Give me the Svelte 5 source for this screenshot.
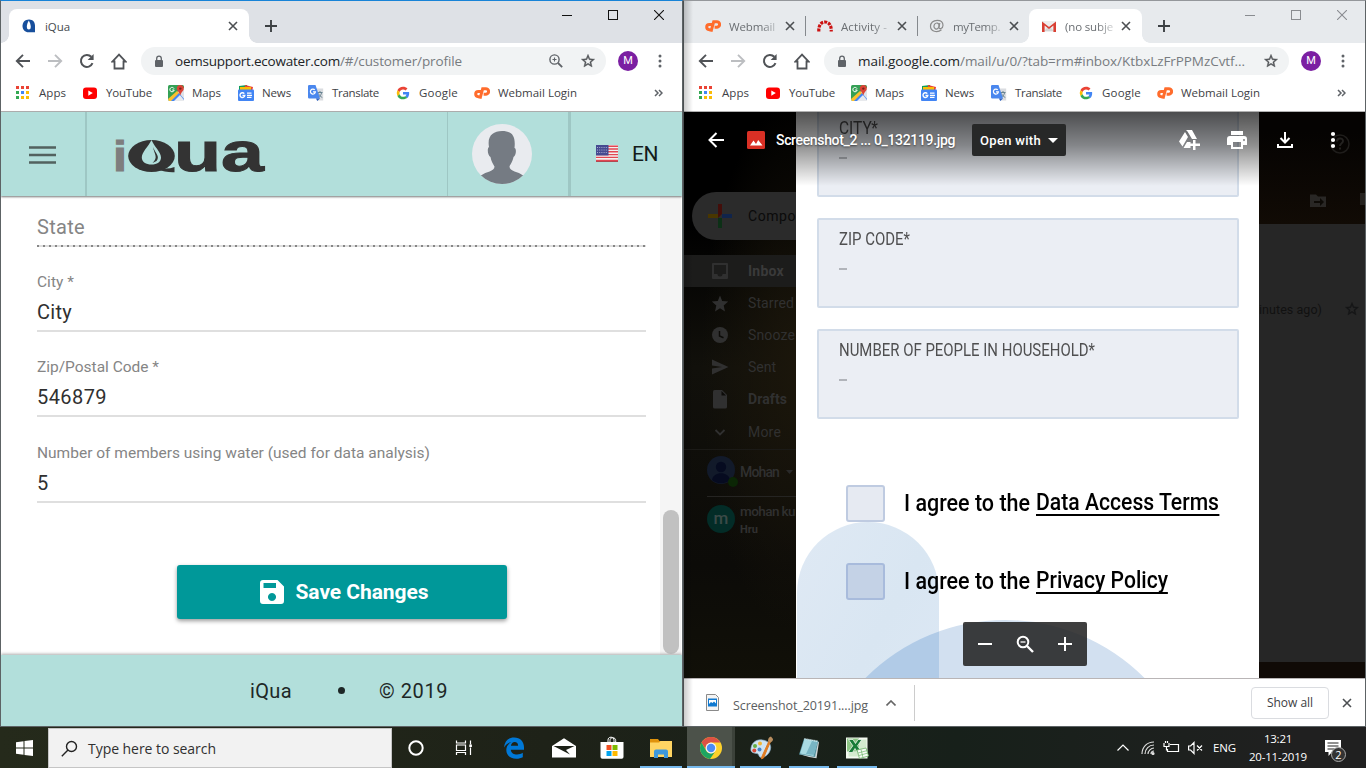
<script>
  const bookmarks = [
    { icon: 'apps', label: 'Apps', w: 67, tw: 27 },
    { icon: 'youtube', label: 'YouTube', w: 86, tw: 46 },
    { icon: 'maps', label: 'Maps', w: 70, tw: 29 },
    { icon: 'news', label: 'News', w: 70, tw: 29 },
    { icon: 'translate', label: 'Translate', w: 87, tw: 47 },
    { icon: 'google', label: 'Google', w: 79, tw: 39 },
    { icon: 'cp', label: 'Webmail Login', w: 110, tw: 79 }
  ];
  const tabs = [
    { icon: 'cp', label: 'Webmail', tw: 46 },
    { icon: 'activity', label: 'Activity -', tw: 46 },
    { icon: 'at', label: 'myTemp.', tw: 47 },
    { icon: 'gmail', label: '(no subje', tw: 48, active: true }
  ];
  const fields = [
    { label: 'City *', value: 'City', lw: 37, vw: 35 },
    { label: 'Zip/Postal Code *', value: '546879', lw: 122, vw: 70 },
    { label: 'Number of members using water (used for data analysis)', value: '5', lw: 393, vw: 11 }
  ];
  const folders = [
    { icon: 'inbox', label: 'Inbox', bold: true, tw: 36 },
    { icon: 'star', label: 'Starred', tw: 46 },
    { icon: 'clock', label: 'Snooze', tw: 47 },
    { icon: 'send', label: 'Sent', tw: 28 },
    { icon: 'draft', label: 'Drafts', bold: true, tw: 39 },
    { icon: 'more', label: 'More', tw: 33 }
  ];
  const formBoxes = [
    { label: 'CITY*', tw: 39 },
    { label: 'ZIP CODE*', tw: 71 },
    { label: 'NUMBER OF PEOPLE IN HOUSEHOLD*', tw: 256 }
  ];
  const terms = [
    { link: 'Data Access Terms', tw: 183 },
    { link: 'Privacy Policy', tw: 132 }
  ];
  const pinned = ['cortana', 'taskview', 'edge', 'mail', 'store', 'explorer', 'chrome', 'paint', 'notepad', 'excel'];

  // Tracks the text so that it fills the given width.
  function fit(node, w) {
    const natural = node.getBoundingClientRect().width;
    node.style.letterSpacing = (w - natural) / node.textContent.length + 'px';
  }
  // Condenses or expands the glyphs themselves to the given width.
  function squeeze(node, w) {
    const natural = node.getBoundingClientRect().width;
    node.style.transform = `scaleX(${w / natural})`;
    node.style.marginRight = w - natural + 'px';
  }
</script>

{#snippet icon(name)}
  {#if name === 'apps'}
    <svg width="16" height="16" viewBox="0 0 16 16">
      {#each ['#ea4335', '#ea4335', '#ea4335', '#34a853', '#4285f4', '#fbbc05', '#34a853', '#fbbc05', '#fbbc05'] as c, i}
        <rect x={1 + (i % 3) * 5} y={1 + Math.floor(i / 3) * 5} width="3" height="3" fill={c} />
      {/each}
    </svg>
  {:else if name === 'youtube'}
    <svg width="16" height="16" viewBox="0 0 16 16"><rect x="1" y="2.5" width="14" height="11.5" rx="3" fill="#f00" /><path d="M6.3 5.4v5.4L10.8 8.1z" fill="#fff" /></svg>
  {:else if name === 'maps'}
    <svg width="16" height="16" viewBox="0 0 16 16"><rect width="16" height="16" rx="1.5" fill="#34a055" /><path d="M0 15L14 3h2v13H1z" fill="#dfe3e8" /><path d="M0 14L9 6l3 3-7 7H1z" fill="#fbc02d" /><path d="M3 16L11 8l5 6v2z" fill="#4285f4" /><path d="M6 16l6-6 4 5v1z" fill="#e8eaed" /><path d="M6 3.6A2.2 2.2 0 1 0 6.2 5H4.2" fill="none" stroke="#fff" stroke-width="1" /><path d="M12.3 0a3.5 3.5 0 0 0-3.5 3.5c0 2.6 2.6 3.2 3.5 7 .9-3.8 3.5-4.4 3.5-7A3.5 3.5 0 0 0 12.3 0z" fill="#db4437" /><circle cx="12.3" cy="3.6" r="1.2" fill="#7b231a" /></svg>
  {:else if name === 'news'}
    <svg width="16" height="16" viewBox="0 0 16 16"><path d="M1 1l8-1 1 6H1z" fill="#0f9d58" /><path d="M7 0l8 2-1 5H6z" fill="#ea4335" /><path d="M2 2h11v5H2z" fill="#fbbc04" /><rect y="4.5" width="16" height="11.5" rx="1" fill="#4285f4" /><path d="M6.3 8.6A2.4 2.4 0 1 0 6.8 10.4H4.5" fill="none" stroke="#fff" stroke-width="1.4" /><path d="M9 8.2h4.5M9 10.3h5M9 12.4h4.5" stroke="#fff" stroke-width="1.2" /></svg>
  {:else if name === 'translate'}
    <svg width="16" height="16" viewBox="0 0 16 16"><path d="M6 3.5h9.2v12H9z" fill="#dadce0" /><path d="M9.5 7.5h5M12 6v1.5m1.7 0c-.5 2.5-2 4-3.7 5m.5-4c.7 1.8 2 3 3.8 4" fill="none" stroke="#607d8b" stroke-width=".9" /><path d="M1.2 0h6.3L12 13.5H1.2A1.2 1.2 0 0 1 0 12.300V1.200A1.200 1.200 0 0 1 1.200 0z" fill="#4a87ee" /><path d="M8 13.500h4L9.300 16z" fill="#2b5fc0" /><path d="M6.800 4.900A2.500 2.500 0 1 0 7.400 6.900H5" fill="none" stroke="#fff" stroke-width="1.200" /></svg>
  {:else if name === 'google'}
    <svg width="16" height="16" viewBox="0 0 48 48"><path fill="#ea4335" d="M24 13.500c3 0 5.600 1 7.700 3l5.700-5.700C33.900 7.500 29.400 5.500 24 5.500c-7.400 0-13.700 4.200-16.700 10.300l6.600 5.100C15.500 16.600 19.400 13.500 24 13.500z" /><path fill="#4285f4" d="M42.500 24.500c0-1.300-.1-2.500-.4-3.700H24v7.600h10.400c-.5 2.400-1.900 4.400-3.900 5.700l6.300 5C40.500 35.700 42.500 30.600 42.500 24.500z" /><path fill="#fbbc05" d="M13.900 27.700a11.500 11.500 0 0 1 0-6.900l-6.600-5.100a18.500 18.500 0 0 0 0 17.100z" /><path fill="#34a853" d="M24 43c5.100 0 9.400-1.700 12.800-4.500l-6.300-4.900c-1.800 1.200-3.900 1.900-6.500 1.900-4.700 0-8.700-3.200-10.100-7.800l-6.600 5.100C10.300 38.800 16.600 43 24 43z" /></svg>
  {:else if name === 'cp'}
    <svg width="16" height="16" viewBox="0 0 16 16" fill="none" stroke="#ff6c2c" stroke-width="3"><path d="M7 6.500H4.300a2.600 2.600 0 0 0 0 5.200h1.400" /><path d="M6 13.700L8.700 3.700h3a2.700 2.700 0 0 1 .3 5.500H9.600" /></svg>
  {:else if name === 'activity'}
    <svg width="16" height="16" viewBox="0 0 16 16" fill="none" stroke="#c11" stroke-width="3.200"><path d="M1.800 13.500C1.500 7.500 4 4 8 4s6.600 3.500 6.200 9.500" stroke-dasharray="2.900 1.100" /></svg>
  {:else if name === 'at'}
    <svg width="16" height="16" viewBox="0 0 16 16" fill="none" stroke="#8b8b8b" stroke-width="1.200"><ellipse cx="7.500" cy="8" rx="2.500" ry="3" transform="rotate(20 7.500 8)" /><path d="M10.800 5L10 9.500c0 2 4 1.400 4-2.200 0-3.200-2.500-5-5.800-5-4 0-6.700 2.700-6.700 6 0 5 6.500 7 11 3.500" /></svg>
  {:else if name === 'gmail'}
    <svg width="16" height="16" viewBox="0 0 16 16"><path d="M1 3h14v11H1z" fill="#eee" /><path d="M3 13l5-5 5 5z" fill="#d5d5d5" /><path d="M1 3.400L8 9l7-5.600V14h-2.600V7.600L8 11 3.600 7.600V14H1z" fill="#d93f33" /></svg>
  {:else if name === 'iqua'}
    <svg width="16" height="16" viewBox="0 0 16 16"><path d="M8 1.500C4 1.500 1.500 4.300 1.500 8S4 14.300 7.500 14.300h6.500V8C14 4.300 12 1.500 8 1.500z" fill="#174f9c" /><path d="M7.800 2.500C6.500 5 5.800 6.800 5.800 9a2 2.500 0 0 0 4 0C9.800 6.800 9 5 7.800 2.500z" fill="#fff" /></svg>
  {:else if name === 'x'}
    <svg width="10" height="10" viewBox="0 0 10 10" stroke="#4c4f52" stroke-width="1.600"><path d="M1 1l8 8M9 1L1 9" /></svg>
  {:else if name === 'back'}
    <svg width="16" height="16" viewBox="0 0 16 16" fill="none" stroke="#505357" stroke-width="1.900"><path d="M15 8H2.500M8 1.800L1.800 8 8 14.200" /></svg>
  {:else if name === 'forward'}
    <svg width="16" height="16" viewBox="0 0 16 16" fill="none" stroke="#bcbec1" stroke-width="1.900"><path d="M1 8h12.500M8 1.800L14.200 8 8 14.200" /></svg>
  {:else if name === 'reload'}
    <svg width="16" height="16" viewBox="0 0 16 16"><path d="M13.500 10.200A6 6 0 1 1 12.300 3.800" fill="none" stroke="#505357" stroke-width="2" /><path d="M14.600 1v6H8.600z" fill="#505357" /></svg>
  {:else if name === 'home'}
    <svg width="16" height="17" viewBox="0 0 16 17" fill="none" stroke="#505357" stroke-width="1.800"><path d="M8 1.600L1.500 8.500H3.500V15.500H12.500V8.500H14.500z" /></svg>
  {:else if name === 'lock'}
    <svg width="10" height="13" viewBox="0 0 10 13"><rect x="1" y="5" width="8" height="7" rx="1" fill="#5f6368" /><path d="M2.700 5.500V3.400a2.300 2.300 0 0 1 4.600 0v2.100" fill="none" stroke="#5f6368" stroke-width="1.300" /></svg>
  {:else if name === 'zoom'}
    <svg width="14" height="14" viewBox="0 0 14 14" fill="none" stroke="#5f6368" stroke-width="1.400"><circle cx="5.500" cy="5.500" r="4.600" /><path d="M9 9l4.200 4.200" stroke-width="1.800" /><path d="M3.500 5.500h4M5.500 3.500v4" stroke-width="1.100" /></svg>
  {:else if name === 'outlinestar'}
    <svg width="16" height="16" viewBox="0 0 24 24"><path fill-rule="evenodd" d="M22 9.240l-7.190-.62L12 2 9.190 8.630 2 9.240l5.460 4.730L5.820 21 12 17.270 18.180 21l-1.630-7.030L22 9.240zM12 15.400l-3.760 2.270 1-4.280-3.320-2.880 4.380-.38L12 6.100l1.710 4.040 4.380.38-3.320 2.880 1 4.280L12 15.400z" fill="#505357" stroke="#505357" stroke-width=".6" /></svg>
  {:else if name === 'inbox'}
    <svg width="24" height="24" viewBox="0 0 24 24"><path fill-rule="evenodd" d="M19 4H5a1 1 0 0 0-1 1v14a1 1 0 0 0 1 1h14a1 1 0 0 0 1-1V5a1 1 0 0 0-1-1zm-1 11h-3.500a2.500 2.500 0 0 1-5 0H6V6h12z" fill="currentColor" /></svg>
  {:else if name === 'star'}
    <svg width="24" height="24" viewBox="0 0 24 24"><path d="M12 17.300L17 20.500l-1.300-6 4.500-4-6-.5L12 4.500 9.800 10l-6 .5 4.500 4-1.300 6z" fill="currentColor" /></svg>
  {:else if name === 'clock'}
    <svg width="24" height="24" viewBox="0 0 24 24"><circle cx="12" cy="12" r="8" fill="currentColor" /><path d="M11.500 8v5l4 1.800" stroke="#0c0b08" stroke-width="1.500" fill="none" /></svg>
  {:else if name === 'send'}
    <svg width="24" height="24" viewBox="0 0 24 24"><path d="M4 4.500L20.500 12 4 19.500v-6L14 12 4 10.500z" fill="currentColor" /></svg>
  {:else if name === 'draft'}
    <svg width="24" height="24" viewBox="0 0 24 24"><path d="M6.500 3h7.500l5 5v12a1.500 1.500 0 0 1-1.500 1.500h-11A1.500 1.500 0 0 1 5 20V4.500A1.500 1.500 0 0 1 6.500 3z" fill="currentColor" /><path d="M13.500 4v4.500H18" fill="#0c0b08" /></svg>
  {:else if name === 'more'}
    <svg width="24" height="24" viewBox="0 0 24 24"><path d="M7.500 10l4.500 4.500L16.500 10" fill="none" stroke="currentColor" stroke-width="1.800" /></svg>
  {:else if name === 'cortana'}
    <svg width="24" height="24" viewBox="0 0 24 24"><circle cx="12" cy="12" r="6.700" fill="none" stroke="#fff" stroke-width="2" /></svg>
  {:else if name === 'taskview'}
    <svg width="24" height="24" viewBox="0 0 24 24" fill="none" stroke="#fff" stroke-width="1.200"><path d="M4.500 4.500v2.500h9V4.500M4.500 19v-2.500h9V19M4.500 9h9v5.500h-9zM18.500 4.500v4M18.500 11.500V19" /><path d="M17.300 8.500h2.600v2.500h-2.600z" fill="#fff" stroke="none" /></svg>
  {:else if name === 'edge'}
    <svg width="24" height="24" viewBox="0 0 24 24"><path d="M2 11.500C2.700 5 6.500 1.500 12.200 1.500c6 0 9.800 4.200 9.800 9.800v2.400H8.800c.3 3.500 3.300 4.800 6.200 4.800 2.300 0 4.300-.7 5.800-1.700v4.500c-1.700.9-3.900 1.500-6.500 1.500-6 0-10-3.500-10-8.700 0-3.500 1.800-6.500 5.100-8-2.800.5-5.500 2.300-7.400 5.400zM8.900 9.800h7.200c0-2.500-1.300-3.700-3.400-3.700-2 0-3.400 1.400-3.800 3.700z" fill="#0078d7" /></svg>
  {:else if name === 'mail'}
    <svg width="26" height="24" viewBox="0 0 26 24"><path d="M1 10L13 2.200 25 10v11.500H1z" fill="#fff" /><path d="M2.500 10h21L15 14l4 4.500z" fill="#1d2118" /></svg>
  {:else if name === 'store'}
    <svg width="24" height="24" viewBox="0 0 24 24"><path d="M8 6V4.200C8 2.300 9 1.200 11 1.200s3 1.100 3 3V6M10 6V4.500c0-1.800 1-2.700 2.800-2.700s2.900 1 2.900 2.700V6" fill="none" stroke="#fff" stroke-width="1" /><path d="M.5 6h23v15a1.800 1.800 0 0 1-1.800 1.800H2.300A1.800 1.800 0 0 1 .5 21z" fill="#fff" /><path d="M6.500 9h5v5h-5z" fill="#f25022" /><path d="M12.500 9h5v5h-5z" fill="#7fba00" /><path d="M6.500 15h5v5h-5z" fill="#00a4ef" /><path d="M12.500 15h5v5h-5z" fill="#ffb900" /></svg>
  {:else if name === 'explorer'}
    <svg width="24" height="24" viewBox="0 0 24 24"><path d="M1 3h8l1.500 2H22v4H1z" fill="#e0930c" /><path d="M1 6.500h9L11.500 5H23v16H1z" fill="#ffd563" /><path d="M5 21v-5.500A2 2 0 0 1 7 13.500h10a2 2 0 0 1 2 2V22h-4v-3.500H9V22H5z" fill="#3d98dc" /></svg>
  {:else if name === 'chrome'}
    <svg width="24" height="24" viewBox="0 0 24 24"><circle cx="12" cy="12" r="11" fill="#fdd12c" /><path d="M2.500 6.500A11 11 0 0 1 21.500 6.500H12a5.500 5.500 0 0 0-5 7.500z" fill="#dd5144" /><path d="M2.500 6.500a11 11 0 0 0 8.500 16.450L16.700 14.800a5.500 5.500 0 0 1-9.500-.1z" fill="#1da462" /><circle cx="12" cy="12" r="5.400" fill="#f5f5f5" /><circle cx="12" cy="12" r="4.200" fill="#4c8bf5" /></svg>
  {:else if name === 'paint'}
    <svg width="26" height="24" viewBox="0 0 26 24"><path d="M3 12C4 6 9 3 14.500 4c6 .8 9 4.500 8 9-1 5-5 8-9 8.500-3 .3-2-3.500-4.500-4-3-.5-7-.5-6-5.500z" fill="#cfe3f2" stroke="#87a9c3" stroke-width=".7" /><circle cx="7" cy="10" r="2" fill="#65ae45" /><circle cx="12" cy="7.500" r="2" fill="#f2b534" /><circle cx="6.300" cy="14.500" r="2" fill="#d84a38" /><circle cx="11.500" cy="13.500" r="2" fill="#4382c9" /><path d="M21 5l1.500.5L15.500 22l-2 .8.300-2z" fill="#df7b22" stroke="#df7b22" /><path d="M20 5c0-3 1.500-4 3-4.500L25 3c0 2-1 3-3 3.500z" fill="#b98e60" /></svg>
  {:else if name === 'notepad'}
    <svg width="24" height="24" viewBox="0 0 24 24"><path d="M7 2.500l14.500 2.500-3 16.500L2 18.500z" fill="#5795a2" /><path d="M7.500 3l13 2.200-4 14.800L3 17.500z" fill="#a9dbe3" /><path d="M15 5l5.500 1-3.700 13L9 18z" fill="#78b5c4" /><path d="M2.500 18L18 21l3-15 1 .3-2.500 16L12 21z" fill="#cfd7d9" /><path d="M7.500 2.800l13.500 2.400" stroke="#e3eef0" stroke-width="1.500" stroke-dasharray="1 1" /></svg>
  {:else if name === 'excel'}
    <svg width="24" height="24" viewBox="0 0 24 24"><path d="M1 1.500h21.500v21H1z" fill="#f4faf1" /><path d="M2 2.500h12v13H2z" fill="#8cc484" /><path d="M14 3.500h7.500v17H3.500V16H14z" fill="#d4ebcf" /><path d="M3.500 3.500h4.500l2.500 4L13 3.500h4l-4.500 6.300L17 16.500h-4.500l-2.500-4-2.500 4H3l4.800-6.700z" fill="#187c37" stroke="#fff" stroke-width=".7" /><path d="M12 14l9-2 2.500 8-9 2.500z" fill="#f7fbf6" stroke="#6eb46a" stroke-width=".8" /><path d="M13 17l9.500-2.500M14 19.500l9-2.500M16 13.500l2 8" stroke="#6eb46a" stroke-width=".7" /></svg>
  {/if}
{/snippet}

{#snippet controls()}
  <div class="controls">
    <svg width="10" height="10" viewBox="0 0 10 10"><path d="M0 5.500h10" stroke="currentColor" /></svg>
    <svg width="10" height="10" viewBox="0 0 10 10"><rect x=".5" y=".5" width="9" height="9" fill="none" stroke="currentColor" /></svg>
    <svg width="10" height="10" viewBox="0 0 10 10"><path d="M0 0l10 10M10 0L0 10" stroke="currentColor" stroke-width="1.100" /></svg>
  </div>
{/snippet}

{#snippet plus()}
  <svg class="plus" width="12" height="12" viewBox="0 0 12 12"><path d="M6 0v12M0 6h12" stroke="#3c4043" stroke-width="1.900" /></svg>
{/snippet}

{#snippet toolbar(host, hw, path, pw, magnifier)}
  <div class="toolbar">
    <span class="nav">{@render icon('back')}</span>
    <span class="nav">{@render icon('forward')}</span>
    <span class="nav">{@render icon('reload')}</span>
    <span class="nav">{@render icon('home')}</span>
    <div class="omnibox">
      {@render icon('lock')}
      <div class="url"><span use:fit={hw}>{host}</span><span class="path" use:fit={pw}>{path}</span></div>
      {#if magnifier}{@render icon('zoom')}{/if}
      <span class="fav">{@render icon('outlinestar')}</span>
    </div>
    <span class="avatar">M</span>
    <svg class="dots" width="4" height="14" viewBox="0 0 4 14" fill="#5f6368"><circle cx="2" cy="2" r="1.500" /><circle cx="2" cy="7" r="1.500" /><circle cx="2" cy="12" r="1.500" /></svg>
  </div>
  <div class="bookmarks">
    {#each bookmarks as b}
      <span class="bookmark" style="width:{b.w}px">{@render icon(b.icon)}<span use:fit={b.tw}>{b.label}</span></span>
    {/each}
    <svg class="overflow" width="9" height="8" viewBox="0 0 9 8" fill="none" stroke="#5f6368" stroke-width="1.500"><path d="M1 1l3 3-3 3M5 1l3 3-3 3" /></svg>
  </div>
{/snippet}

<div class="desktop">
  <section class="window left">
    <div class="strip">
      <div class="tab active wide">{@render icon('iqua')}<span class="title"><span use:fit={25}>iQua</span></span>{@render icon('x')}</div>
      {@render plus()}
      {@render controls()}
    </div>
    {@render toolbar('oemsupport.ecowater.com', 165, '/#/customer/profile', 122, true)}
    <div class="page">
      <header>
        <div class="burger"><svg width="27" height="18" viewBox="0 0 27 18"><path d="M0 1.500h27M0 9h27M0 16.500h27" stroke="#52625f" stroke-width="2.600" /></svg></div>
        <div class="brand">
          <svg width="152" height="36" viewBox="0 0 152 36">
            <text x="-1" y="33" font-size="43" font-weight="700" fill="#7e7e7e" stroke="#7e7e7e" font-family="Liberation Sans" textLength="14" lengthAdjust="spacingAndGlyphs">i</text>
            <ellipse cx="37.500" cy="18" rx="23.300" ry="16" fill="#333" />
            <path d="M44 29q8 3 16.500 0v5.300q-8 .5-18-3z" fill="#333" />
            <path d="M37.500 2C34 9 27.800 14 27.800 19.500 27.800 24 32 26.500 37.500 26.500S47 24 47 19.500C47 14 40.500 9 37.500 2z" fill="#b2dfdb" />
            <path d="M39 9c2 6 7.500 9 3.500 14l-4 2c6-6 2-8 .5-16z" fill="#333" />
            <text x="60" y="32.500" font-size="55" font-weight="700" fill="#333" stroke="#333" stroke-width="1" font-family="Liberation Sans" textLength="90" lengthAdjust="spacingAndGlyphs">ua</text>
          </svg>
        </div>
        <div class="person">
          <svg width="60" height="60" viewBox="0 0 60 60"><clipPath id="round"><circle cx="30" cy="30" r="30" /></clipPath><g clip-path="url(#round)"><path d="M0 0h60v60H0z" fill="#e9ebef" /><path d="M17 23C15 12 21 7 30 7c9 0 14 4 12.500 17 2 0 2 7-1 9-1 5-3 7-4 9.500 0 5 9 5 13.500 9L60 62H0l9-10.500c5-4 13.500-4 13.500-9C21 40 19 37 18.500 33c-3-2-3.500-9-1.500-10z" fill="#757b83" /></g></svg>
        </div>
        <div class="lang">
          <svg width="22" height="18" viewBox="0 0 22 18"><rect width="22" height="17" fill="#f3f1f1" /><path d="M0 1.200h22M0 4h22M0 6.800h22M0 9.600h22M0 12.400h22M0 15.500h22" stroke="#e24652" stroke-width="1.400" /><path d="M0 0h12.500v10.500H0z" fill="#454a91" /><path d="M1 2.500h11M1 5h11M1 7.500h11" stroke="#a7abcf" stroke-dasharray="1 1.200" /><path d="M0 16.500h22" stroke="#b24852" /></svg>
          <span use:fit={26}>EN</span>
        </div>
      </header>
      <div class="scroll">
        <main>
          <div class="state"><span use:fit={48}>State</span></div>
          {#each fields as f}
            <div class="field"><div class="label"><span use:fit={f.lw}>{f.label}</span></div><div class="value"><span use:fit={f.vw}>{f.value}</span></div></div>
          {/each}
          <button><svg width="24" height="24" viewBox="0 0 24 24"><path d="M3 0h14.500L24 6.500V21a3 3 0 0 1-3 3H3a3 3 0 0 1-3-3V3a3 3 0 0 1 3-3zm.500 3v5h12.500V3zM12 13a4 4 0 1 0 .01 0z" fill="#fff" fill-rule="evenodd" /></svg><span use:fit={133}>Save Changes</span></button>
        </main>
        <div class="track"><div class="thumb"></div></div>
      </div>
      <footer><span use:fit={42}>iQua</span><i></i><span use:fit={69}>© 2019</span></footer>
    </div>
  </section>

  <section class="window right">
    <div class="strip">
      {#each tabs as t, i}
        <div class="tab" class:active={t.active} class:sep={i < 2}>{@render icon(t.icon)}<span class="title faded"><span use:fit={t.tw}>{t.label}</span></span>{@render icon('x')}</div>
      {/each}
      {@render plus()}
      {@render controls()}
    </div>
    {@render toolbar('mail.google.com', 102, '/mail/u/0/?tab=rm#inbox/KtbxLzFrPPMzCvtf...', 285, false)}
    <div class="viewer">
      <aside>
        <div class="compose"><svg width="24" height="24" viewBox="0 0 24 24"><path d="M10 0h4v10l-4 4z" fill="#430e0a" /><path d="M14 10h10v4H14z" fill="#10244b" /><path d="M10 14h4v10h-4z" fill="#0c3016" /><path d="M0 10h10v4H0z" fill="#493600" /></svg><span use:fit={48}>Compo</span></div>
        <div class="folders">
          {#each folders as f}
            <div class="folder" class:bold={f.bold} class:selected={f.icon === 'inbox'}>{@render icon(f.icon)}<span use:fit={f.tw}>{f.label}</span></div>
          {/each}
        </div>
        <div class="me"><svg width="31" height="31" viewBox="0 0 31 31"><circle cx="14" cy="14" r="14" fill="#121a2a" /><circle cx="14" cy="11" r="5.200" fill="#060b20" /><path d="M5 24c1-9 17-9 18 0a14 14 0 0 1-18 0z" fill="#060b20" /><circle cx="26" cy="26" r="5" fill="#0b2605" /></svg><span use:fit={39}>Mohan</span><svg width="7" height="4"><path d="M0 0h7L3.500 4z" fill="#292929" /></svg></div>
        <div class="contact"><span class="bubble">m</span><div><span use:fit={55}>mohan ku</span><b use:fit={18}>Hru</b></div></div>
      </aside>
      <div class="photo">
        <svg class="shapes" width="463" height="157" viewBox="0 0 463 157">
          <defs><clipPath id="pill"><rect x="1" width="142" height="260" rx="71" /></clipPath><linearGradient id="soft" x1="0" y1="0" x2="1" y2="1"><stop offset="0" stop-color="#dfe9f4" /><stop offset=".5" stop-color="#d9e6f2" /><stop offset="1" stop-color="#dde8f5" /></linearGradient></defs>
          <circle cx="209" cy="295" r="197" fill="#d2e0f0" /><rect x="1" width="142" height="260" rx="71" fill="url(#soft)" /><circle cx="209" cy="295" r="197" fill="#b1cbe7" clip-path="url(#pill)" />
        </svg>
        <div class="boxes">
          {#each formBoxes as b}
            <div class="box"><span use:squeeze={b.tw}>{b.label}</span><i></i></div>
          {/each}
        </div>
        {#each terms as t, i}
          <div class="agree"><span class="check" class:tinted={i === 1}></span><span class="say" use:squeeze={126}>I agree to the</span><u use:squeeze={t.tw}>{t.link}</u></div>
        {/each}
        <div class="fade"></div>
      </div>
      <div class="mailpane">
        <div class="mailtop"><svg width="17" height="15" viewBox="0 0 17 15"><path d="M0 1.500h6l2 2h8V14H0z" fill="#292725" /><path d="M4 8h6V5l4 4-4 4v-3H4z" fill="#0d0a06" /></svg><span></span></div>
        <div class="ago"><span use:fit={63}>inutes ago)</span><span class="dimstar">{@render icon('outlinestar')}</span></div>
      </div>
      <div class="viewbar">
        <svg class="vb" width="16" height="16" viewBox="0 0 16 16" fill="none" stroke="#fff" stroke-width="2"><path d="M16 8H2M8.500 1L1.500 8l7 7" /></svg>
        <svg class="pic" width="18" height="18" viewBox="0 0 18 18"><rect width="18" height="18" rx="1.500" fill="#d93025" /><path d="M3 14.500l3.500-5 2.500 3.500 2.200-4 4.300 5.500z" fill="#fff" /></svg>
        <span class="filename" use:fit={179}>Screenshot_2 ... 0_132119.jpg</span>
        <span class="openwith"><span use:fit={61}>Open with</span><svg width="10" height="5"><path d="M0 0h10L5 5z" fill="#fff" /></svg></span>
        <div class="actions">
          <svg width="24" height="24" viewBox="0 0 24 24" fill="#fff"><path d="M9 2h6l5 9h-5L10.500 3.500zM8 4l3 5-5.500 9.500L2 13.500zM10 14h3.500v6H6.500l2-3.500zM16 12h2.500v3.500H23V18h-4.500v4H16v-4h-4v-2.500h4z" /></svg>
          <svg width="24" height="24" viewBox="0 0 24 24"><path d="M6 3h12v4H6zM5 8h14a3 3 0 0 1 3 3v6h-4v4H6v-4H2v-6a3 3 0 0 1 3-3zm3 6v5h8v-5zm11-3a1 1 0 1 0 .01 0z" fill="#fff" fill-rule="evenodd" /></svg>
          <svg width="24" height="24" viewBox="0 0 24 24" fill="none" stroke="#fff" stroke-width="2"><path d="M12 4v10M7.500 10l4.500 4.500 4.500-4.500M5 16v3h14v-3" /></svg>
          <svg class="kebab" width="24" height="24" viewBox="0 0 24 24"><circle cx="19" cy="16" r="9" fill="none" stroke="#1f1d1b" stroke-width="1.500" /><path d="M16 13.500c0-4 6-4 6-.5 0 2.500-3 2-3 5m0 1.500v2" fill="none" stroke="#242220" stroke-width="2" /><g fill="#fff"><circle cx="12" cy="6" r="2.100" /><circle cx="12" cy="12" r="2.100" /><circle cx="12" cy="18" r="2.100" /></g></svg>
        </div>
      </div>
      <div class="zoombar">
        <svg width="16" height="16" viewBox="0 0 16 16"><path d="M1 8h14" stroke="#fff" stroke-width="2" /></svg>
        <svg width="18" height="18" viewBox="0 0 18 18" fill="none" stroke="#fff"><circle cx="7" cy="7" r="5.300" stroke-width="2" /><path d="M11 11l6 6" stroke-width="2.400" /><path d="M4.500 7h5" stroke-width="1.300" /></svg>
        <svg width="16" height="16" viewBox="0 0 16 16"><path d="M1 8h14M8 1v14" stroke="#fff" stroke-width="2" /></svg>
      </div>
    </div>
    <div class="downloads">
      <svg width="13" height="17" viewBox="0 0 13 17"><path d="M.5.5h9l3 3v13H.5z" fill="#f4f4f4" stroke="#8a8a8a" /><path d="M2 4.500h9v8H2z" fill="#0f79d0" /><path d="M3 6h7v3.500L8 7.500 6.500 9 5 8 3 10z" fill="#fff" /></svg>
      <span class="dlname" use:fit={135}>Screenshot_20191....jpg</span>
      <svg width="10" height="6" viewBox="0 0 10 6"><path d="M.5 5.500L5 1l4.500 4.500" fill="none" stroke="#666" stroke-width="1.600" /></svg>
      <span class="rule"></span>
      <span class="showall"><span use:fit={46}>Show all</span></span>
      <span class="dlx">{@render icon('x')}</span>
    </div>
  </section>
</div>

<nav class="taskbar">
  <div class="start"><svg width="17" height="16" viewBox="0 0 17 16" fill="#fff"><path d="M0 2.300L7.500 1.200V7.500H0zM8.500 1L17 0v7.500H8.500zM0 8.500h7.500v6.300L0 13.700zM8.500 8.500H17V16l-8.500-1z" /></svg></div>
  <div class="search"><svg width="17" height="17" viewBox="0 0 17 17" fill="none" stroke="#222" stroke-width="1.400"><circle cx="10.500" cy="6.500" r="5" /><path d="M7 10L.8 16.200" /></svg><span use:fit={128}>Type here to search</span></div>
  <div class="pins">
    {#each pinned as p, i}
      <span class="pin" class:running={i > 4} class:current={p === 'chrome'}>{@render icon(p)}</span>
    {/each}
  </div>
  <div class="tray">
    <svg width="12" height="7" viewBox="0 0 12 7" fill="none" stroke="#fff" stroke-width="1.200"><path d="M.5 6.500L6 1l5.500 5.500" /></svg>
    <svg width="14" height="14" viewBox="0 0 14 14" fill="none" stroke="#ddd" stroke-width="1.200"><path d="M1 13C1 6 6 1 13 1M4 13C4 8 8 4 13 4M7 13c0-3 3-6 6-6M10 13c0-2 1-3 3-3" /><circle cx="12" cy="12.500" r="1" fill="#fff" /></svg>
    <svg width="17" height="14" viewBox="0 0 17 14" fill="none" stroke="#fff" stroke-width="1.200"><path d="M7 3.500h8.500v7H4.500V8M1 2v3.500h5V2M2.500 0v2M4.500 0v2M3.500 5.500v4" /></svg>
    <svg width="15" height="14" viewBox="0 0 15 14" fill="none" stroke="#fff" stroke-width="1.200"><path d="M.6 5h2L6 1.500v11L2.600 9h-2zM9 4.500l5 5M14 4.500l-5 5" /></svg>
    <span class="eng" use:fit={23}>ENG</span>
    <div class="clock"><span use:fit={28}>13:21</span><span use:fit={58}>20-11-2019</span></div>
    <div class="notes"><svg width="18" height="18" viewBox="0 0 18 18"><path d="M1 1h16v12H8l-3.500 4v-4H1z" fill="#fff" /><path d="M3.500 4h11M3.500 7h11M3.500 10h7" stroke="#222" stroke-width="1.200" /></svg><span class="count">2</span></div>
  </div>
</nav>

<style>
  :global(body) { margin: 0; width: 1366px; height: 768px; overflow: hidden; font-family: 'Open Sans', sans-serif; }
  svg { display: block; flex: none; }
  span { white-space: nowrap; }
  .desktop { display: grid; grid-template-columns: 683px 683px; height: 727px; background: #55595a; }
  .window { box-sizing: border-box; height: 727px; display: flex; flex-direction: column; border: 1px solid #5d6365; border-top-color: #1883d7; background: #fff; overflow: hidden; min-width: 0; }
  .window.right { border-top-color: #94979b; border-left-color: #4b4f51; position: relative; }
  .strip { height: 42px; flex: none; display: flex; align-items: flex-end; background: #dee1e6; padding-left: 8px; position: relative; }
  .right .strip { background: #e7eaed; padding-left: 9px; color: #666a6e; }
  .tab { box-sizing: border-box; width: 112px; height: 34px; display: flex; align-items: center; padding-left: 12px; font-size: 11.500px; position: relative; color: #6a6e72; }
  .tab.wide { width: 240px; color: #45494d; }
  .tab.active { background: #fff; border-radius: 8px 8px 0 0; }
  .right .tab.active { width: 113px; }
  .tab.active::before, .tab.active::after { content: ''; position: absolute; bottom: 0; width: 8px; height: 8px; }
  .tab.active::before { left: -8px; background: radial-gradient(circle at 0 0, transparent 7.500px, #fff 8px); }
  .tab.active::after { right: -8px; background: radial-gradient(circle at 100% 0, transparent 7.500px, #fff 8px); }
  .title { width: 49px; margin-left: 8px; }
  .wide .title { width: 183px; }
  .title.faded { mask-image: linear-gradient(90deg, #000 66%, #0005 95%); }
  .tab > :global(svg:last-child) { margin-left: 7px; }
  .wide > :global(svg:last-child) { margin-left: 0; }
  .tab.sep::after { content: ''; position: absolute; right: -1px; top: 7px; width: 1px; height: 20px; background: #85898d; }
  .plus { margin: 0 0 11px 16px; }
  .controls { margin-left: auto; display: flex; gap: 36px; padding: 0 18px 23px 0; color: #111; }
  .right .controls { color: #898c90; }
  .toolbar { height: 36px; flex: none; display: flex; align-items: center; padding-left: 6px; }
  .nav { width: 32px; display: flex; justify-content: center; }
  .omnibox { box-sizing: border-box; width: 465px; height: 28px; margin-left: 6px; padding: 0 10px 0 13px; border-radius: 14px; background: #f1f3f4; display: flex; align-items: center; }
  .url { flex: 1; margin-left: 11px; font-size: 13.500px; color: #202326; white-space: nowrap; display: flex; }
  .path { color: #777b80; }
  .fav { margin-left: 17px; }
  .avatar { width: 20px; height: 20px; border-radius: 50%; margin-left: 12px; background: #7b1fa2; color: #fff; font: 11px/20px Roboto, sans-serif; text-align: center; }
  .dots { margin-left: 20px; }
  .bookmarks { box-sizing: border-box; height: 33px; flex: none; display: flex; align-items: center; padding: 0 19px 5px 14px; border-bottom: 1px solid #b1b1b1; font-size: 11.500px; color: #3e4145; }
  .bookmark { display: flex; align-items: center; gap: 8px; }
  .overflow { margin-left: auto; }

  .page { flex: 1; display: flex; flex-direction: column; font-family: Roboto, sans-serif; min-height: 0; }
  header { box-sizing: border-box; height: 84px; flex: none; display: flex; align-items: center; background: #b2dfdb; box-shadow: 0 1px 2px #777; position: relative; z-index: 1; }
  header > div { box-sizing: border-box; height: 84px; display: flex; align-items: center; }
  .burger { width: 86px; padding: 2px 0 0 28px; border-right: 2px solid #9ec7c4; }
  .brand { width: 361px; padding: 4px 0 0 27px; border-right: 1px solid #9ec7c4; }
  .brand svg { overflow: visible; }
  .person { width: 123px; padding-left: 24px; border-right: 3px solid #9ec7c4; }
  .lang { padding-left: 25px; gap: 14px; font-size: 21px; color: #151c1b; }
  .scroll { flex: 1; display: flex; min-height: 0; }
  main { flex: 1; padding: 0 14px 0 36px; color: #303030; }
  .state { height: 51px; box-sizing: border-box; padding-top: 19px; font-size: 20px; line-height: 24px; color: #858585; background: repeating-linear-gradient(90deg, #868686 0 2px, #dedede 2px 6px) bottom / 100% 2px no-repeat; }
  .field { height: 85px; margin-top: .200px; box-sizing: border-box; border-bottom: 2px solid #dfdfdf; }
  .label { padding-top: 25px; font-size: 15.500px; line-height: 20px; color: #858585; }
  .value { font-size: 20px; line-height: 28px; padding-top: 6px; }
  button { width: 330px; height: 54px; margin: 62.300px 0 0 140px; padding: 0 0 0 4px; border: 0; border-radius: 3px; background: #009899; box-shadow: 0 2px 4px #0006; display: flex; align-items: center; justify-content: center; gap: 12px; font: 700 21px Roboto, sans-serif; color: #fff; }
  .track { width: 22px; background: linear-gradient(90deg, #f5f5f5 21px, #fff 21px); display: flex; align-items: flex-end; }
  .thumb { width: 16px; height: 144px; border-radius: 8px; background: #c1c1c1; margin: 0 0 1px 3px; }
  footer { height: 71px; flex: none; background: #b2dfdb; box-shadow: 0 -1px 3px #aaa; display: flex; align-items: center; padding-left: 249px; font-size: 20px; color: #1d2726; position: relative; z-index: 1; }
  footer i { width: 7px; height: 7px; border-radius: 50%; background: #1d2726; margin: 0 34px 0 46px; }

  .viewer { height: 566px; flex: none; position: relative; display: flex; background: #0c0b08; overflow: hidden; font-family: Roboto, sans-serif; }
  aside { width: 112px; flex: none; overflow: hidden; color: #303030; background: radial-gradient(ellipse at 100% 45%, #1b160b, transparent 60%), linear-gradient(#000 20%, #11100b 45%, #0c0b08 80%, #111008); }
  .compose { height: 48px; margin: 80px 0 0 8px; padding-left: 16px; width: 130px; border-radius: 24px; background: #2b2b2b; display: flex; align-items: center; gap: 16px; font-size: 14px; color: #0a0a0a; }
  .folders { margin-top: 15px; font-size: 14px; }
  .folder { height: 32px; display: flex; align-items: center; padding-left: 24px; gap: 16px; }
  .folder :global(svg) { color: #303030; }
  .folder:last-child { padding-top: 1px; }
  .selected { background: #1c1c1b; color: #3a3a3a; }
  .bold { font-weight: 700; }
  .me { height: 47px; box-sizing: border-box; margin-top: 1px; padding: 0 0 3px 23px; display: flex; align-items: center; font-size: 14px; font-weight: 500; border-top: 1px solid #1b1a17; gap: 2px; }
  .me svg:last-child { margin-left: 5px; }
  .contact { margin-left: 23px; border-top: 1px solid #252422; padding-top: 6px; display: flex; gap: 5px; font-size: 13.500px; font-weight: 500; }
  .contact div { display: flex; flex-direction: column; align-items: flex-start; }
  .contact b { font-size: 11px; margin-top: 4px; }
  .bubble { width: 28px; height: 28px; margin-top: 2px; border-radius: 50%; flex: none; background: #032c27; text-align: center; line-height: 26px; font-size: 17px; color: #3b4a47; }
  .photo { width: 463px; flex: none; background: #fff; position: relative; overflow: hidden; }
  .shapes { position: absolute; left: 0; bottom: -1px; }
  .boxes { display: flex; flex-direction: column; gap: 21px; margin: -5px 20px 66px 21px; }
  .box { box-sizing: border-box; height: 90px; border: 2px solid #d2dce9; border-radius: 2px; background: #ebeef4; padding: 8px 0 0 20px; font-size: 18.500px; line-height: 22px; color: #4f4f50; }
  .box span, .agree span.say, .agree u { display: inline-block; transform-origin: left; white-space: nowrap; }
  .box i { display: block; width: 8px; height: 2px; background: #b1b4ba; margin-top: 18px; }
  .agree { position: relative; display: flex; align-items: center; height: 37px; margin: 0 0 41px 50px; font-size: 24px; font-weight: 500; color: #000; }
  .check { box-sizing: border-box; width: 39px; height: 37px; border: 2px solid #bfcbe1; border-radius: 3px; background: #e6eaf2; margin-right: 19px; }
  .tinted { background: #c4d2e6; border-color: #a8bbdc; }
  .agree .say { margin-top: -2px; }
  .agree u { margin-left: 6px; text-decoration: none; border-bottom: 2px solid #000; line-height: 23px; margin-top: 0; }
  .fade { position: absolute; inset: 0 0 auto; height: 74px; background: linear-gradient(#000000ad, #00000070 45%, #0000); }
  .mailpane { flex: 1; background: linear-gradient(#050302 0 20px, #110b05 112px, #262626 112px 550px, #100a06 550px); }
  .mailtop { height: 112px; box-sizing: border-box; padding: 81px 0 0 51px; display: flex; gap: 33px; }
  .mailtop span { width: 6px; height: 12px; background: #25221f; }
  .ago { display: flex; align-items: center; margin-top: 77px; font-size: 12.500px; color: #111; }
  .dimstar { margin-left: 22px; filter: brightness(.25); }
  .viewbar { position: absolute; inset: 0 0 auto; height: 56px; display: flex; align-items: center; padding-left: 24px; color: #fff; }
  .pic { margin-left: 23px; }
  .filename { margin-left: 11px; font-size: 14px; font-weight: 500; text-shadow: 0 1px 2px #0008; }
  .openwith { box-sizing: border-box; width: 94px; height: 32px; margin-left: 17px; padding-left: 8px; background: #272828; border-radius: 2px; display: flex; align-items: center; gap: 7px; font-size: 13px; font-weight: 500; }
  .actions { display: flex; gap: 24px; margin-left: 111px; }
  .kebab { overflow: visible; }
  .zoombar { position: absolute; left: 279px; top: 510px; width: 124px; height: 44px; box-sizing: border-box; padding: 0 14px; border-radius: 2px; background: #212121dd; display: flex; align-items: center; justify-content: space-between; }
  .downloads { flex: 1; display: flex; align-items: center; padding: 0 13px 0 22px; border-top: 1px solid #b9b5b6; color: #5b5e61; font-size: 12.500px; }
  .dlname { margin: 6px 18px 0 14px; }
  .rule { width: 1px; height: 36px; background: #ccc; margin-left: 18px; }
  .showall { margin-left: auto; width: 76px; height: 30px; border: 1px solid #dadce0; border-radius: 4px; display: flex; align-items: center; justify-content: center; font-size: 12px; color: #3c4043; }
  .dlx { margin-left: 13px; }
  .right::before { content: ''; position: absolute; left: 0; top: 0; width: 9px; height: 727px; background: linear-gradient(90deg, #0003, #0000); z-index: 2; }

  .taskbar { height: 41px; display: flex; background: linear-gradient(90deg, #252a1b, #1e2218 40%, #17201a 70%, #202020 95%); color: #fff; font-size: 12px; }
  .start { width: 48px; display: flex; align-items: center; justify-content: center; }
  .search { box-sizing: border-box; width: 344px; margin-top: 1px; border: 1px solid #c5c5c5; background: #f2f2f2; display: flex; align-items: center; padding-left: 12px; gap: 10px; color: #303030; font-size: 14px; }
  .pins { display: grid; grid-template-columns: 48px 48px 52px 48px 48px 50px 50px 49px 48px 48px; }
  .pin { display: flex; align-items: center; justify-content: center; height: 41px; position: relative; }
  .running::after { content: ''; position: absolute; left: 4px; right: 4px; bottom: 0; height: 2px; background: #76b9ed; }
  .current { background: #4c524a; border-right: 3px solid #3c423a; box-sizing: border-box; margin: 0 1px; padding-left: 3px; }
  .current::after { left: 0; right: -3px; }
  .tray { flex: 1; display: flex; align-items: center; justify-content: flex-end; padding-right: 24px; gap: 8px; }
  .tray > svg:first-child { margin-right: 4px; }
  .eng { margin: 0 5px 0 2px; font-size: 11.500px; }
  .clock { width: 58px; display: flex; flex-direction: column; align-items: center; gap: 2px; font-size: 11.500px; line-height: 16px; }
  .notes { margin-left: 9px; position: relative; width: 18px; height: 18px; }
  .count { position: absolute; left: 7px; top: 8px; width: 13px; height: 13px; border: 1px solid #aaa; border-radius: 50%; background: #333; font-size: 11px; line-height: 13px; text-align: center; }
</style>
